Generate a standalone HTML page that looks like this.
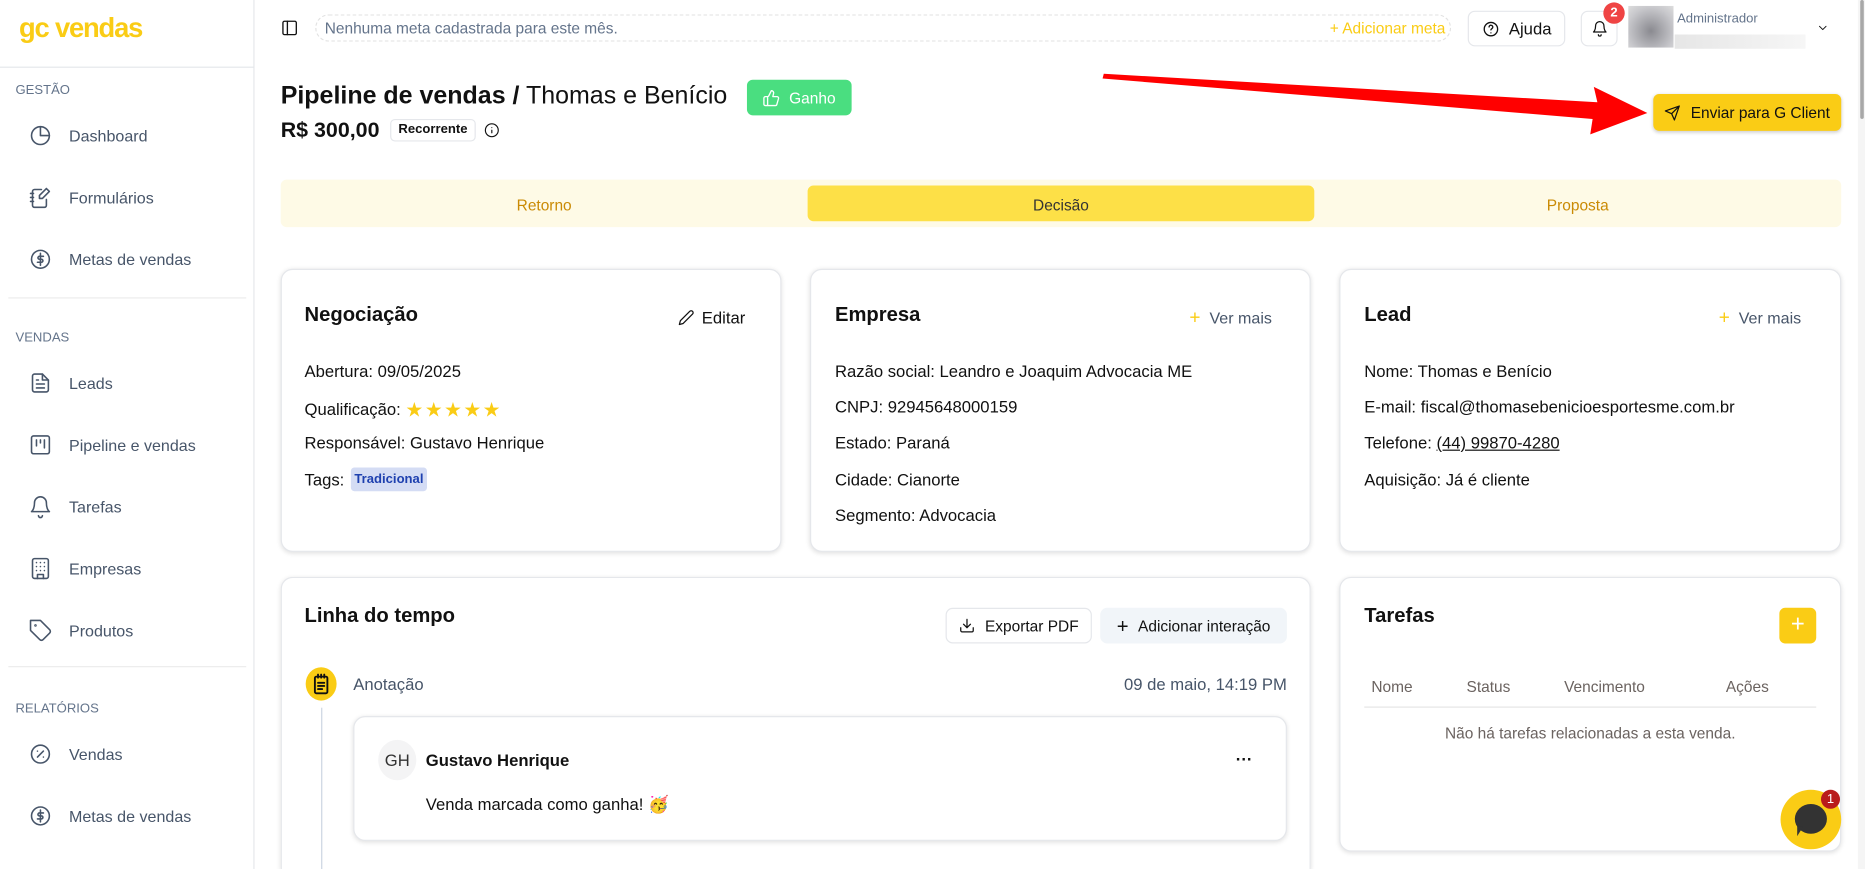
<!DOCTYPE html>
<html><head><meta charset="utf-8">
<style>
*{box-sizing:border-box;margin:0;padding:0}
html,body{width:1865px;height:869px;overflow:hidden;background:#fff}
#w{position:absolute;left:0;top:0;width:1568px;height:731px;overflow:hidden;transform:scale(1.18941);transform-origin:0 0;font-family:"Liberation Sans",sans-serif;color:#111}
.a{position:absolute}
.side{left:0;top:0;width:214px;height:731px;border-right:1px solid #e5e7eb}
.sec{font-size:11px;color:#64748b;left:13px}
.it{left:24px;font-size:13.5px;color:#475569;display:flex;align-items:center;gap:14px}
.it svg{width:20px;height:20px;fill:none;stroke:#475569;stroke-width:1.6;stroke-linecap:round;stroke-linejoin:round}
.hr{height:1px;background:#ececec;left:7px;width:200px}
.card{background:#fff;border:1px solid #e5e7eb;border-radius:10px;box-shadow:0 1px 4px rgba(0,0,0,.12)}
.h{font-size:17px;font-weight:bold;color:#111}
.row{font-size:14px;color:#111}
.btn{border:1px solid #e5e7eb;border-radius:6px;display:flex;align-items:center;justify-content:center;font-size:13px;gap:8px;background:#fff}
.ic{fill:none;stroke:#111;stroke-width:1.8;stroke-linecap:round;stroke-linejoin:round}
</style></head><body><div id="w">

<div class="a side"></div>
<div class="a" style="left:16px;top:10px;font-size:23px;font-weight:bold;color:#facc15;letter-spacing:-1px">gc vendas</div>
<div class="a" style="left:0;top:56px;width:214px;height:1px;background:#e5e7eb"></div>
<div class="a sec" style="top:70px">GESTÃO</div>
<div class="a it" style="top:104px"><svg viewBox="0 0 24 24"><path d="M21 12A9 9 0 1 1 12 3"/><path d="M12 3a9 9 0 0 1 9 9h-9z"/></svg>Dashboard</div>
<div class="a it" style="top:156px"><svg viewBox="0 0 24 24"><path d="M13 4H6a2 2 0 0 0-2 2v14a2 2 0 0 0 2 2h10a2 2 0 0 0 2-2v-6"/><path d="M18 3l3 3-7 7h-3v-3z"/><path d="M2 8h3M2 12h3M2 16h3"/></svg>Formulários</div>
<div class="a it" style="top:208px"><svg viewBox="0 0 24 24"><circle cx="12" cy="12" r="9"/><path d="M15 9h-4a1.5 1.5 0 0 0 0 3h2a1.5 1.5 0 0 1 0 3H9M12 6v12"/></svg>Metas de vendas</div>
<div class="a hr" style="top:250px"></div>
<div class="a sec" style="top:278px">VENDAS</div>
<div class="a it" style="top:312px"><svg viewBox="0 0 24 24"><path d="M14 3H6a2 2 0 0 0-2 2v14a2 2 0 0 0 2 2h12a2 2 0 0 0 2-2V9z"/><path d="M14 3v6h6M8 13h8M8 17h8M8 9h2"/></svg>Leads</div>
<div class="a it" style="top:364px"><svg viewBox="0 0 24 24"><rect x="3" y="3" width="18" height="18" rx="2"/><path d="M8 7v6M12 7v3M16 7v8"/></svg>Pipeline e vendas</div>
<div class="a it" style="top:416px"><svg viewBox="0 0 24 24"><path d="M6 8a6 6 0 0 1 12 0c0 7 3 9 3 9H3s3-2 3-9"/><path d="M10 21a2 2 0 0 0 4 0"/></svg>Tarefas</div>
<div class="a it" style="top:468px"><svg viewBox="0 0 24 24"><rect x="4" y="2" width="16" height="20" rx="2"/><path d="M9 22v-4h6v4M8 6h.01M12 6h.01M16 6h.01M8 10h.01M12 10h.01M16 10h.01M8 14h.01M12 14h.01M16 14h.01"/></svg>Empresas</div>
<div class="a it" style="top:520px"><svg viewBox="0 0 24 24"><path d="M12 2H2v10l9.3 9.3a2.4 2.4 0 0 0 3.4 0l6.6-6.6a2.4 2.4 0 0 0 0-3.4z"/><circle cx="7" cy="7" r=".5"/></svg>Produtos</div>
<div class="a hr" style="top:560px"></div>
<div class="a sec" style="top:590px">RELATÓRIOS</div>
<div class="a it" style="top:624px"><svg viewBox="0 0 24 24"><circle cx="12" cy="12" r="9"/><path d="M15 9l-6 6M9 9h.01M15 15h.01"/></svg>Vendas</div>
<div class="a it" style="top:676px"><svg viewBox="0 0 24 24"><circle cx="12" cy="12" r="9"/><path d="M15 9h-4a1.5 1.5 0 0 0 0 3h2a1.5 1.5 0 0 1 0 3H9M12 6v12"/></svg>Metas de vendas</div>

<svg class="a ic" style="left:236px;top:16px" width="15" height="15" viewBox="0 0 24 24"><rect x="3" y="3" width="18" height="18" rx="2"/><path d="M9 3v18"/></svg>
<div class="a" style="left:265px;top:12px;width:955px;height:23px;border:1px dashed #e2e2e2;border-radius:12px"></div>
<div class="a" style="left:273px;top:16px;font-size:13px;color:#64748b">Nenhuma meta cadastrada para este mês.</div>
<div class="a" style="left:1118px;top:16px;font-size:13px;color:#facc15">+ Adicionar meta</div>
<div class="a btn" style="left:1234px;top:9px;width:82px;height:30px;font-size:14px"><svg class="ic" width="15" height="15" viewBox="0 0 24 24"><circle cx="12" cy="12" r="9"/><path d="M9.5 9a2.5 2.5 0 0 1 5 .5c0 1.7-2.5 2-2.5 3.5M12 17h.01"/></svg>Ajuda</div>
<div class="a btn" style="left:1329px;top:9px;width:31px;height:30px"><svg class="ic" width="14" height="14" viewBox="0 0 24 24"><path d="M6 8a6 6 0 0 1 12 0c0 7 3 9 3 9H3s3-2 3-9"/><path d="M10 21a2 2 0 0 0 4 0"/></svg></div>
<div class="a" style="left:1348px;top:2px;width:18px;height:18px;border-radius:50%;background:#ef4444;color:#fff;font-size:11px;font-weight:bold;text-align:center;line-height:18px">2</div>
<div class="a" style="left:1369px;top:5px;width:38px;height:35px;background:radial-gradient(circle at 50% 60%,#8a8a90,#c8c8cc 70%,#ddd)"></div>
<div class="a" style="left:1410px;top:10px;font-size:11px;color:#64748b">Administrador</div>
<div class="a" style="left:1408px;top:29px;width:110px;height:12px;background:linear-gradient(90deg,#e6e6e6,#eee,#f6f6f6)"></div>
<svg class="a ic" style="left:1527px;top:18px" width="11" height="11" viewBox="0 0 24 24"><path d="M6 9l6 6 6-6"/></svg>
<div class="a" style="left:1562px;top:0;width:6px;height:731px;background:#f5f5f5"></div>
<div class="a" style="left:1564px;top:0;width:3px;height:100px;background:#a8a8a8;border-radius:2px"></div>

<div class="a" style="left:236px;top:69px;font-size:21px;color:#111"><b>Pipeline de vendas /</b> Thomas e Benício</div>
<div class="a" style="left:628px;top:67px;width:88px;height:30px;background:#4ade80;border-radius:5px;color:#fff;font-size:13px;display:flex;align-items:center;justify-content:center;gap:7px"><svg width="15" height="15" viewBox="0 0 24 24" fill="none" stroke="#fff" stroke-width="1.8" stroke-linejoin="round"><path d="M7 10v12M15 5.9L14 10h5.8a2 2 0 0 1 1.9 2.5l-2.3 8A2 2 0 0 1 17.5 22H4a2 2 0 0 1-2-2v-8a2 2 0 0 1 2-2h2.8a2 2 0 0 0 1.8-1.1L12 2a3 3 0 0 1 3 3.9z"/></svg>Ganho</div>
<div class="a" style="left:236px;top:99px;font-size:18px;font-weight:bold">R$ 300,00</div>
<div class="a" style="left:328px;top:100px;width:72px;height:19px;border:1px solid #e5e7eb;border-radius:4px;font-size:11px;font-weight:bold;text-align:center;line-height:17px">Recorrente</div>
<svg class="a ic" style="left:407px;top:103px" width="13" height="13" viewBox="0 0 24 24"><circle cx="12" cy="12" r="10"/><path d="M12 16v-4M12 8h.01"/></svg>
<svg class="a" style="left:0;top:0" width="1568" height="140"><path d="M928 62 L1343 86 L1340 73 L1385 95 L1337 113 L1339 100 L927 66 Z" fill="#ff0000"/></svg>
<div class="a" style="left:1390px;top:79px;width:158px;height:31px;background:#facc15;border-radius:5px;box-shadow:0 1px 3px rgba(0,0,0,.2);font-size:13px;color:#111;display:flex;align-items:center;justify-content:center;gap:8px"><svg class="ic" width="14" height="14" viewBox="0 0 24 24"><path d="M22 2L11 13M22 2l-7 20-4-9-9-4z"/></svg>Enviar para G Client</div>

<div class="a" style="left:236px;top:151px;width:1312px;height:40px;background:#fefae6;border-radius:5px"></div>
<div class="a" style="left:679px;top:156px;width:426px;height:30px;background:#fde047;border-radius:5px"></div>
<div class="a" style="left:236px;top:165px;width:443px;text-align:center;font-size:13px;color:#ca8a04">Retorno</div>
<div class="a" style="left:679px;top:165px;width:426px;text-align:center;font-size:13px;color:#333">Decisão</div>
<div class="a" style="left:1105px;top:165px;width:443px;text-align:center;font-size:13px;color:#ca8a04">Proposta</div>

<div class="a card" style="left:236px;top:226px;width:421px;height:238px"></div>
<div class="a h" style="left:256px;top:255px">Negociação</div>
<div class="a" style="left:570px;top:259px;font-size:14px;display:flex;align-items:center;gap:6px"><svg class="ic" width="14" height="14" viewBox="0 0 24 24"><path d="M17 3a2.8 2.8 0 1 1 4 4L7.5 20.5 2 22l1.5-5.5z"/></svg>Editar</div>
<div class="a row" style="left:256px;top:304px">Abertura: 09/05/2025</div>
<div class="a row" style="left:256px;top:334px">Qualificação: <span style="color:#facc15;font-size:17px;letter-spacing:1px;position:relative;top:1px">★★★★★</span></div>
<div class="a row" style="left:256px;top:364px">Responsável: Gustavo Henrique</div>
<div class="a row" style="left:256px;top:395px">Tags:</div>
<div class="a" style="left:295px;top:393px;width:64px;height:20px;background:#d4dcf4;border-radius:3px;color:#1e40af;font-size:11px;font-weight:bold;text-align:center;line-height:20px">Tradicional</div>

<div class="a card" style="left:681px;top:226px;width:421px;height:238px"></div>
<div class="a h" style="left:702px;top:255px">Empresa</div>
<div class="a" style="left:1000px;top:259px;font-size:13.5px;color:#475569"><span style="color:#facc15;font-size:16px">+</span>&nbsp; Ver mais</div>
<div class="a row" style="left:702px;top:304px">Razão social: Leandro e Joaquim Advocacia ME</div>
<div class="a row" style="left:702px;top:334px">CNPJ: 92945648000159</div>
<div class="a row" style="left:702px;top:364px">Estado: Paraná</div>
<div class="a row" style="left:702px;top:395px">Cidade: Cianorte</div>
<div class="a row" style="left:702px;top:425px">Segmento: Advocacia</div>

<div class="a card" style="left:1126px;top:226px;width:422px;height:238px"></div>
<div class="a h" style="left:1147px;top:255px">Lead</div>
<div class="a" style="left:1445px;top:259px;font-size:13.5px;color:#475569"><span style="color:#facc15;font-size:16px">+</span>&nbsp; Ver mais</div>
<div class="a row" style="left:1147px;top:304px">Nome: Thomas e Benício</div>
<div class="a row" style="left:1147px;top:334px">E-mail: fiscal@thomasebenicioesportesme.com.br</div>
<div class="a row" style="left:1147px;top:364px">Telefone: <u>(44) 99870-4280</u></div>
<div class="a row" style="left:1147px;top:395px">Aquisição: Já é cliente</div>

<div class="a card" style="left:236px;top:485px;width:866px;height:246px;border-bottom:none;border-radius:10px 10px 0 0"></div>
<div class="a h" style="left:256px;top:508px">Linha do tempo</div>
<div class="a btn" style="left:795px;top:511px;width:123px;height:30px"><svg class="ic" width="14" height="14" viewBox="0 0 24 24"><path d="M21 15v4a2 2 0 0 1-2 2H5a2 2 0 0 1-2-2v-4M7 10l5 5 5-5M12 15V3"/></svg>Exportar PDF</div>
<div class="a btn" style="left:925px;top:511px;width:157px;height:30px;background:#f1f5f9;border-color:#f1f5f9"><span style="font-size:17px;line-height:1">+</span>Adicionar interação</div>
<div class="a" style="left:257px;top:561px;width:26px;height:28px;border-radius:50%;background:#facc15"></div>
<svg class="a ic" style="left:263px;top:566px" width="14" height="18" viewBox="0 0 16 20" stroke-width="1.6"><rect x="2" y="3" width="12" height="16" rx="1.5"/><path d="M5 1v3M8 1v3M11 1v3M5 9h6M5 12h6M5 15h4"/></svg>
<div class="a" style="left:297px;top:567px;font-size:14px;color:#475569">Anotação</div>
<div class="a" style="left:945px;top:567px;font-size:14px;color:#475569">09 de maio, 14:19 PM</div>
<div class="a" style="left:270px;top:595px;width:1px;height:136px;background:#cbd5e1"></div>
<div class="a card" style="left:297px;top:602px;width:785px;height:105px"></div>
<div class="a" style="left:318px;top:622px;width:32px;height:34px;border-radius:50%;background:#f4f4f5;font-size:14px;color:#333;text-align:center;line-height:34px">GH</div>
<div class="a" style="left:358px;top:631px;font-size:14px;font-weight:bold">Gustavo Henrique</div>
<div class="a" style="left:1039px;top:630px;font-size:14px;font-weight:bold">···</div>
<div class="a" style="left:358px;top:668px;font-size:14px">Venda marcada como ganha! 🥳</div>

<div class="a card" style="left:1126px;top:485px;width:422px;height:231px"></div>
<div class="a h" style="left:1147px;top:508px">Tarefas</div>
<div class="a" style="left:1496px;top:511px;width:31px;height:30px;background:#facc15;border-radius:5px;color:#fff;font-size:20px;text-align:center;line-height:29px">+</div>
<div class="a" style="left:1153px;top:570px;font-size:13px;color:#6b6360">Nome</div>
<div class="a" style="left:1233px;top:570px;font-size:13px;color:#6b6360">Status</div>
<div class="a" style="left:1315px;top:570px;font-size:13px;color:#6b6360">Vencimento</div>
<div class="a" style="left:1451px;top:570px;font-size:13px;color:#6b6360">Ações</div>
<div class="a" style="left:1147px;top:594px;width:380px;height:1px;background:#e5e5e5"></div>
<div class="a" style="left:1147px;top:609px;width:380px;text-align:center;font-size:13px;color:#6b6360">Não há tarefas relacionadas a esta venda.</div>

<div class="a" style="left:1497px;top:664px;width:51px;height:50px;border-radius:50%;background:#facc15"></div>
<div class="a" style="left:1509px;top:676px;width:27px;height:25px;border-radius:50%;background:#333"></div>
<div class="a" style="left:1511px;top:695px;width:0;height:0;border-left:5px solid #333;border-bottom:8px solid transparent"></div>
<div class="a" style="left:1531px;top:664px;width:16px;height:16px;border-radius:50%;background:#b91c1c;color:#fff;font-size:11px;text-align:center;line-height:16px">1</div>

</div></body></html>
